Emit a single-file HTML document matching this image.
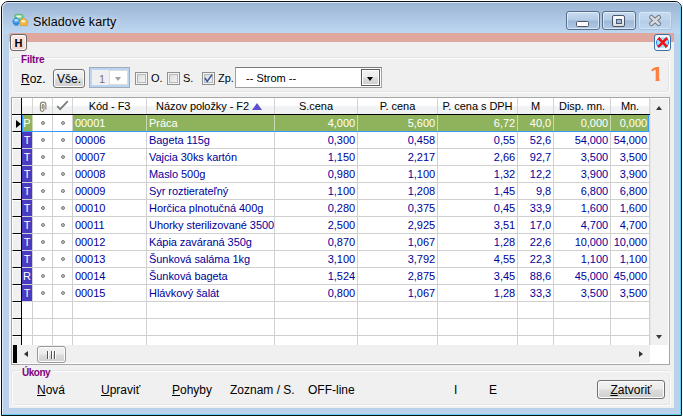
<!DOCTYPE html>
<html><head><meta charset="utf-8"><title>Skladové karty</title>
<style>
html,body{margin:0;padding:0;background:#fff;}
body{width:683px;height:417px;position:relative;overflow:hidden;font-family:"Liberation Sans",Arial,sans-serif;font-size:12px;color:#000;}
.abs,.abs *{position:absolute;}
div{position:absolute;box-sizing:border-box;}
span{position:absolute;white-space:nowrap;}
#win{left:1px;top:1px;width:681px;height:415px;border:1px solid #0c0f13;border-radius:7px 7px 0 0;background:#b9d1ea;overflow:hidden;}
#glass{left:0;top:0;width:679px;height:32px;background:linear-gradient(#98b3d2 0,#a3bddb 8px,#b3cde9 22px,#bfd7f1 32px);}
#inner{left:0;top:0;width:679px;height:413px;border:1px solid #dfeaf6;border-radius:6px 6px 0 0;border-bottom-color:#5fd0ee;border-right-color:#5fd0ee;}
#client{left:7px;top:31px;width:665px;height:375px;background:#f0f0f0;}
#pink{left:0;top:0;width:665px;height:9px;background:#dfa79d;}
.t{font-size:12px;line-height:14px;}
u{text-decoration:underline;}
.s11{font-size:11px;}
.grp{border:1px solid #fdfdfd;border-radius:3px;box-shadow:-1px -1px 0 rgba(190,200,212,.28),inset -1px -1px 0 rgba(190,200,212,.28);}
.gl{font-weight:bold;font-size:10px;letter-spacing:-0.2px;color:#800080;background:#f0f0f0;padding:0 2px;line-height:12px;}
.btn{border:1px solid #707070;border-radius:3px;background:linear-gradient(#f2f2f2 0,#ebebeb 48%,#dddddd 52%,#cfcfcf 100%);box-shadow:inset 0 0 0 1px #fcfcfc;}
.cb{width:13px;height:13px;border:1px solid #8e8f8f;background:linear-gradient(135deg,#d8d8d8,#f6f6f6);box-shadow:inset 0 0 0 1px #f4f4f4, inset 0 0 0 2px #b5b9bd;}
#grid{width:659px;height:268px;background:#fff;overflow:hidden;border:1px solid #a6a6a6;}
#grid>div{}
.tri{display:inline-block;position:static;width:0;height:0;border-left:5px solid transparent;border-right:5px solid transparent;border-bottom:7px solid #5a50d0;margin-left:5px;vertical-align:0px;}
.au{width:0;height:0;border-left:3.5px solid transparent;border-right:3.5px solid transparent;border-bottom:4px solid #383838;}
.ad{width:0;height:0;border-left:3.5px solid transparent;border-right:3.5px solid transparent;border-top:4px solid #383838;}
.al{width:0;height:0;border-top:3.5px solid transparent;border-bottom:3.5px solid transparent;border-right:4px solid #303030;}
.ar{width:0;height:0;border-top:3.5px solid transparent;border-bottom:3.5px solid transparent;border-left:4px solid #303030;}
.hd{top:0;height:16px;background:linear-gradient(#ffffff 0,#ffffff 45%,#f1f2f4 55%,#f1f2f4 100%);border-right:1px solid #d5d5d5;text-align:center;font-size:11px;line-height:16px;white-space:nowrap;letter-spacing:-0.06px;}
.c{height:17px;border-right:1px solid #d0d0d0;border-bottom:1px solid #d0d0d0;font-size:11px;line-height:16px;color:#000099;letter-spacing:-0.06px;overflow:hidden;white-space:nowrap;}
.r{text-align:right;padding-right:2px;}
.l{padding-left:2px;}
.sel{background:#8fb35d;color:#fff;border-right-color:#c9d9b4;border-bottom-color:#8fb35d;}
.ind{left:0;width:9px;height:17px;background:#f0f0f0;border-bottom:1px solid #000;border-left:1px solid #fff;border-top:1px solid #fff;}
.ty{color:#fff;background:#4a3cc0;text-align:center;}
.ty.sel{background:#8fb35d;}
.dot{width:4px;height:4px;border-radius:2px;background:#c4c4c4;border:1px solid #7c7c7c;}
</style></head><body>
<div id="win"><div id="glass"></div><div id="inner"></div>

<svg style="position:absolute;left:10px;top:10px" width="18" height="16" viewBox="0 0 18 16">
<rect x="2.8" y="2.4" width="8" height="5.5" rx="1.3" fill="#7fd08a" stroke="#4fb262" stroke-width="0.8"/>
<rect x="4.3" y="3.4" width="5" height="2.2" rx="0.8" fill="#e6fae8"/>
<path d="M0.8 8.5 L4.2 5.6 L7.8 8.5 L7 12 L1.6 12 Z" fill="#3f9af0" stroke="#2a7fd8" stroke-width="0.8"/>
<ellipse cx="4.3" cy="8.3" rx="2" ry="1.2" fill="#b8e0ff"/>
<rect x="2.4" y="12.2" width="3.8" height="1.4" fill="#2a7fd8"/>
<path d="M7.5 9.5 L11.5 5.8 L15.8 9.5 L15 13.6 L8.3 13.6 Z" fill="#f0b848" stroke="#d89a28" stroke-width="0.8"/>
<ellipse cx="11.3" cy="9.3" rx="2.2" ry="1.3" fill="#fdeec8"/>
</svg>
<span style="left:31px;top:13px;font-size:12.5px;letter-spacing:0.1px;line-height:15px;color:#000;text-shadow:0 0 7px rgba(255,255,255,.7),0 0 10px rgba(255,255,255,.5);">Skladové karty</span>

<div style="left:564px;top:9px;width:34px;height:19px;border:1px solid #566d8c;border-radius:3px;background:linear-gradient(#c9dcf0 0,#b4cbe6 48%,#9db8d8 52%,#b0c9e6 100%);box-shadow:inset 0 0 0 1px rgba(255,255,255,.55);">
 <div style="left:9px;top:9px;width:13px;height:6px;border:1px solid #4c5566;border-radius:1.5px;background:#fbfbfb;"></div></div>
<div style="left:600px;top:9px;width:34px;height:19px;border:1px solid #566d8c;border-radius:3px;background:linear-gradient(#c9dcf0 0,#b4cbe6 48%,#9db8d8 52%,#b0c9e6 100%);box-shadow:inset 0 0 0 1px rgba(255,255,255,.55);">
 <div style="left:9px;top:3px;width:13px;height:12px;border:1px solid #4c5566;border-radius:2px;background:linear-gradient(#fdfdfd,#dcdfe3);"><div style="left:3px;top:3px;width:6px;height:5px;border:1px solid #4d5b70;background:#9fb8d8;"></div></div></div>
<div style="left:636px;top:9px;width:34px;height:19px;border:1px solid #a9c2de;border-radius:3px;background:linear-gradient(#c5daf1 0,#bdd4ee 48%,#b4cde9 52%,#bfd6ef 100%);box-shadow:inset 0 0 0 1px rgba(255,255,255,.35);">
 <svg style="position:absolute;left:8px;top:1px" width="17" height="15" viewBox="0 0 17 15"><path d="M4.4 4.2 L11.8 10.8 M11.8 4.2 L4.4 10.8" stroke="#6f7884" stroke-width="4.6" stroke-linecap="round"/><path d="M4.4 4.2 L11.8 10.8 M11.8 4.2 L4.4 10.8" stroke="#d6dade" stroke-width="2.6" stroke-linecap="round"/></svg></div>

<div id="client"><div id="pink"></div>
<div class="btn" style="left:1px;top:1px;width:17px;height:17px;border-color:#6e6462;background:linear-gradient(#fbecea,#f0d4cf);"><span style="left:0;top:1px;width:15px;text-align:center;font-weight:bold;font-size:11px;line-height:15px;">H</span></div>
<div style="left:645px;top:1px;width:17px;height:17px;border:1px solid #3b6fa6;border-radius:3px;background:#f3f8fd;">
<svg style="position:absolute;left:0;top:0" width="15" height="15" viewBox="0 0 15 15"><circle cx="7.5" cy="7.5" r="5.3" fill="#8ce8f8"/><circle cx="7.5" cy="7.5" r="3" fill="#c4f4fb"/><path d="M2.2 10.5 A6 6 0 0 1 5 2.2 M12.8 4.5 A6 6 0 0 1 10 12.8" stroke="#2f6fe0" stroke-width="1" fill="none"/><path d="M11.8 1.6 L13.2 5 L10.6 4.6 Z M3.2 13.4 L1.8 10 L4.4 10.4 Z" fill="#2f6fe0"/><path d="M3.4 3 L12 11.8 M12 3 L3.4 11.8" stroke="#f0101c" stroke-width="2.6"/></svg></div>
<div class="grp" style="left:3px;top:25px;width:658px;height:35px;"></div>
<span class="gl" style="left:10px;top:21px;">Filtre</span>
<span class="t" style="left:12px;top:39px;"><u>R</u>oz.</span>
<div class="btn" style="left:44px;top:36px;width:32px;height:19px;"><span class="t" style="left:0;top:2px;width:30px;text-align:center;">Vše.</span></div>
<div style="left:80px;top:34px;width:41px;height:21px;border:1px solid #a3abb5;background:#f0f0f0;box-shadow:inset 0 0 0 2px #b9d5f3;">
<span class="t s11" style="left:9px;top:4px;color:#7a7085;">1</span>
<div style="left:19px;top:2px;width:19px;height:15px;background:#fff;border:1px solid #dcdcdc;"></div>
<div style="left:25px;top:9px;width:0;height:0;border-left:3.5px solid transparent;border-right:3.5px solid transparent;border-top:4px solid #a0a0a0;"></div></div>
<div class="cb" style="left:126px;top:39px;"></div><span class="t s11" style="left:142px;top:38px;">O.</span>
<div class="cb" style="left:158px;top:39px;"></div><span class="t s11" style="left:174px;top:38px;">S.</span>
<div class="cb" style="left:193px;top:39px;"><svg style="position:absolute;left:1px;top:1px" width="9" height="9" viewBox="0 0 9 9"><path d="M1 4 L3.2 7.5 L8 0.8" stroke="#3d5298" stroke-width="1.5" fill="none"/></svg></div><span class="t s11" style="left:209px;top:38px;">Zp.</span>
<div style="left:226px;top:34px;width:147px;height:21px;border:1px solid #a0a0a0;border-top-color:#7b7b7b;background:#fff;">
<span class="t s11" style="left:10px;top:3px;">-- Strom --</span>
<div class="btn" style="left:125px;top:1px;width:19px;height:17px;border-radius:0;border-color:#5c5c5c;box-shadow:inset 0 0 0 1px #fff;"><div style="left:5px;top:7px;width:0;height:0;border-left:3.5px solid transparent;border-right:3.5px solid transparent;border-top:4px solid #000;"></div></div></div>
<span style="left:641px;top:30.5px;font-size:20px;line-height:20px;font-weight:bold;color:#ff7f3f;transform:scaleX(1.25);transform-origin:0 0;clip-path:polygon(0 0,7.6px 0,7.6px 100%,4.4px 100%,4.4px 14.4px,0 14.4px);">1</span>
<div id="grid" style="left:2px;top:64px;">
<div class="hd" style="left:0;width:9px;background:#f0f0f0;border-right:0;border-left:1px solid #fff;border-top:1px solid #fff;"></div>
<div class="hd" style="left:10px;width:11px;"></div>
<div class="hd" style="left:21px;width:20px;"><svg style="position:absolute;left:5px;top:2.5px" width="10.5" height="12.6" viewBox="0 0 10 12"><path d="M7.5 8 L7.5 3.6 A2.6 2.6 0 0 0 2.3 3.6 L2.3 8.2 A1.7 1.7 0 0 0 5.7 8.2 L5.7 4.2 A0.8 0.8 0 0 0 4.1 4.2 L4.1 7.6" stroke="#8d8478" stroke-width="1.1" fill="none"/></svg></div>
<div class="hd" style="left:41px;width:20px;"><svg style="position:absolute;left:3px;top:2px" width="13" height="11" viewBox="0 0 13 11"><path d="M1.2 6.2 L4.2 9.2 L11.8 1.2" stroke="#7a7a7a" stroke-width="1.7" fill="none"/></svg></div>
<div class="hd" style="left:61px;width:74px;">Kód - F3</div>
<div class="hd" style="left:135px;width:128px;"><span style="left:9px;top:0;">Názov položky - F2</span><i class="tri" style="position:absolute;left:105px;top:5px;margin:0;"></i></div>
<div class="hd" style="left:263px;width:83px;">S.cena</div>
<div class="hd" style="left:346px;width:80px;">P. cena</div>
<div class="hd" style="left:426px;width:80px;">P. cena s DPH</div>
<div class="hd" style="left:506px;width:36px;">M</div>
<div class="hd" style="left:542px;width:57px;">Disp. mn.</div>
<div class="hd" style="left:599px;width:39px;">Mn.</div>
<div style="left:0;top:16px;width:638px;height:1px;background:#000;"></div>
<div class="ind" style="top:17px;"></div>
<div class="c ty sel" style="left:10px;top:17px;width:11px;">P</div>
<div class="c" style="left:21px;top:17px;width:20px;"><div class="dot" style="left:8px;top:6px;"></div></div>
<div class="c" style="left:41px;top:17px;width:20px;"><div class="dot" style="left:8px;top:6px;"></div></div>
<div class="c l sel" style="left:61px;top:17px;width:74px;">00001</div>
<div class="c l sel" style="left:135px;top:17px;width:128px;">Práca</div>
<div class="c r sel" style="left:263px;top:17px;width:83px;">4,000</div>
<div class="c r sel" style="left:346px;top:17px;width:80px;">5,600</div>
<div class="c r sel" style="left:426px;top:17px;width:80px;">6,72</div>
<div class="c r sel" style="left:506px;top:17px;width:36px;">40,0</div>
<div class="c r sel" style="left:542px;top:17px;width:57px;">0,000</div>
<div class="c r sel" style="left:599px;top:17px;width:39px;">0,000</div>
<div class="ind" style="top:34px;"></div>
<div class="c ty" style="left:10px;top:34px;width:11px;">T</div>
<div class="c" style="left:21px;top:34px;width:20px;"><div class="dot" style="left:8px;top:6px;"></div></div>
<div class="c" style="left:41px;top:34px;width:20px;"><div class="dot" style="left:8px;top:6px;"></div></div>
<div class="c l" style="left:61px;top:34px;width:74px;">00006</div>
<div class="c l" style="left:135px;top:34px;width:128px;">Bageta 115g</div>
<div class="c r" style="left:263px;top:34px;width:83px;">0,300</div>
<div class="c r" style="left:346px;top:34px;width:80px;">0,458</div>
<div class="c r" style="left:426px;top:34px;width:80px;">0,55</div>
<div class="c r" style="left:506px;top:34px;width:36px;">52,6</div>
<div class="c r" style="left:542px;top:34px;width:57px;">54,000</div>
<div class="c r" style="left:599px;top:34px;width:39px;">54,000</div>
<div class="ind" style="top:51px;"></div>
<div class="c ty" style="left:10px;top:51px;width:11px;">T</div>
<div class="c" style="left:21px;top:51px;width:20px;"><div class="dot" style="left:8px;top:6px;"></div></div>
<div class="c" style="left:41px;top:51px;width:20px;"><div class="dot" style="left:8px;top:6px;"></div></div>
<div class="c l" style="left:61px;top:51px;width:74px;">00007</div>
<div class="c l" style="left:135px;top:51px;width:128px;">Vajcia 30ks kartón</div>
<div class="c r" style="left:263px;top:51px;width:83px;">1,150</div>
<div class="c r" style="left:346px;top:51px;width:80px;">2,217</div>
<div class="c r" style="left:426px;top:51px;width:80px;">2,66</div>
<div class="c r" style="left:506px;top:51px;width:36px;">92,7</div>
<div class="c r" style="left:542px;top:51px;width:57px;">3,500</div>
<div class="c r" style="left:599px;top:51px;width:39px;">3,500</div>
<div class="ind" style="top:68px;"></div>
<div class="c ty" style="left:10px;top:68px;width:11px;">T</div>
<div class="c" style="left:21px;top:68px;width:20px;"><div class="dot" style="left:8px;top:6px;"></div></div>
<div class="c" style="left:41px;top:68px;width:20px;"><div class="dot" style="left:8px;top:6px;"></div></div>
<div class="c l" style="left:61px;top:68px;width:74px;">00008</div>
<div class="c l" style="left:135px;top:68px;width:128px;">Maslo 500g</div>
<div class="c r" style="left:263px;top:68px;width:83px;">0,980</div>
<div class="c r" style="left:346px;top:68px;width:80px;">1,100</div>
<div class="c r" style="left:426px;top:68px;width:80px;">1,32</div>
<div class="c r" style="left:506px;top:68px;width:36px;">12,2</div>
<div class="c r" style="left:542px;top:68px;width:57px;">3,900</div>
<div class="c r" style="left:599px;top:68px;width:39px;">3,900</div>
<div class="ind" style="top:85px;"></div>
<div class="c ty" style="left:10px;top:85px;width:11px;">T</div>
<div class="c" style="left:21px;top:85px;width:20px;"><div class="dot" style="left:8px;top:6px;"></div></div>
<div class="c" style="left:41px;top:85px;width:20px;"><div class="dot" style="left:8px;top:6px;"></div></div>
<div class="c l" style="left:61px;top:85px;width:74px;">00009</div>
<div class="c l" style="left:135px;top:85px;width:128px;">Syr roztierateľný</div>
<div class="c r" style="left:263px;top:85px;width:83px;">1,100</div>
<div class="c r" style="left:346px;top:85px;width:80px;">1,208</div>
<div class="c r" style="left:426px;top:85px;width:80px;">1,45</div>
<div class="c r" style="left:506px;top:85px;width:36px;">9,8</div>
<div class="c r" style="left:542px;top:85px;width:57px;">6,800</div>
<div class="c r" style="left:599px;top:85px;width:39px;">6,800</div>
<div class="ind" style="top:102px;"></div>
<div class="c ty" style="left:10px;top:102px;width:11px;">T</div>
<div class="c" style="left:21px;top:102px;width:20px;"><div class="dot" style="left:8px;top:6px;"></div></div>
<div class="c" style="left:41px;top:102px;width:20px;"><div class="dot" style="left:8px;top:6px;"></div></div>
<div class="c l" style="left:61px;top:102px;width:74px;">00010</div>
<div class="c l" style="left:135px;top:102px;width:128px;">Horčica plnotučná 400g</div>
<div class="c r" style="left:263px;top:102px;width:83px;">0,280</div>
<div class="c r" style="left:346px;top:102px;width:80px;">0,375</div>
<div class="c r" style="left:426px;top:102px;width:80px;">0,45</div>
<div class="c r" style="left:506px;top:102px;width:36px;">33,9</div>
<div class="c r" style="left:542px;top:102px;width:57px;">1,600</div>
<div class="c r" style="left:599px;top:102px;width:39px;">1,600</div>
<div class="ind" style="top:119px;"></div>
<div class="c ty" style="left:10px;top:119px;width:11px;">T</div>
<div class="c" style="left:21px;top:119px;width:20px;"><div class="dot" style="left:8px;top:6px;"></div></div>
<div class="c" style="left:41px;top:119px;width:20px;"><div class="dot" style="left:8px;top:6px;"></div></div>
<div class="c l" style="left:61px;top:119px;width:74px;">00011</div>
<div class="c l" style="left:135px;top:119px;width:128px;">Uhorky sterilizované 3500</div>
<div class="c r" style="left:263px;top:119px;width:83px;">2,500</div>
<div class="c r" style="left:346px;top:119px;width:80px;">2,925</div>
<div class="c r" style="left:426px;top:119px;width:80px;">3,51</div>
<div class="c r" style="left:506px;top:119px;width:36px;">17,0</div>
<div class="c r" style="left:542px;top:119px;width:57px;">4,700</div>
<div class="c r" style="left:599px;top:119px;width:39px;">4,700</div>
<div class="ind" style="top:136px;"></div>
<div class="c ty" style="left:10px;top:136px;width:11px;">T</div>
<div class="c" style="left:21px;top:136px;width:20px;"><div class="dot" style="left:8px;top:6px;"></div></div>
<div class="c" style="left:41px;top:136px;width:20px;"><div class="dot" style="left:8px;top:6px;"></div></div>
<div class="c l" style="left:61px;top:136px;width:74px;">00012</div>
<div class="c l" style="left:135px;top:136px;width:128px;">Kápia zaváraná 350g</div>
<div class="c r" style="left:263px;top:136px;width:83px;">0,870</div>
<div class="c r" style="left:346px;top:136px;width:80px;">1,067</div>
<div class="c r" style="left:426px;top:136px;width:80px;">1,28</div>
<div class="c r" style="left:506px;top:136px;width:36px;">22,6</div>
<div class="c r" style="left:542px;top:136px;width:57px;">10,000</div>
<div class="c r" style="left:599px;top:136px;width:39px;">10,000</div>
<div class="ind" style="top:153px;"></div>
<div class="c ty" style="left:10px;top:153px;width:11px;">T</div>
<div class="c" style="left:21px;top:153px;width:20px;"><div class="dot" style="left:8px;top:6px;"></div></div>
<div class="c" style="left:41px;top:153px;width:20px;"><div class="dot" style="left:8px;top:6px;"></div></div>
<div class="c l" style="left:61px;top:153px;width:74px;">00013</div>
<div class="c l" style="left:135px;top:153px;width:128px;">Šunková saláma 1kg</div>
<div class="c r" style="left:263px;top:153px;width:83px;">3,100</div>
<div class="c r" style="left:346px;top:153px;width:80px;">3,792</div>
<div class="c r" style="left:426px;top:153px;width:80px;">4,55</div>
<div class="c r" style="left:506px;top:153px;width:36px;">22,3</div>
<div class="c r" style="left:542px;top:153px;width:57px;">1,100</div>
<div class="c r" style="left:599px;top:153px;width:39px;">1,100</div>
<div class="ind" style="top:170px;"></div>
<div class="c ty" style="left:10px;top:170px;width:11px;">R</div>
<div class="c" style="left:21px;top:170px;width:20px;"><div class="dot" style="left:8px;top:6px;"></div></div>
<div class="c" style="left:41px;top:170px;width:20px;"><div class="dot" style="left:8px;top:6px;"></div></div>
<div class="c l" style="left:61px;top:170px;width:74px;">00014</div>
<div class="c l" style="left:135px;top:170px;width:128px;">Šunková bageta</div>
<div class="c r" style="left:263px;top:170px;width:83px;">1,524</div>
<div class="c r" style="left:346px;top:170px;width:80px;">2,875</div>
<div class="c r" style="left:426px;top:170px;width:80px;">3,45</div>
<div class="c r" style="left:506px;top:170px;width:36px;">88,6</div>
<div class="c r" style="left:542px;top:170px;width:57px;">45,000</div>
<div class="c r" style="left:599px;top:170px;width:39px;">45,000</div>
<div class="ind" style="top:187px;"></div>
<div class="c ty" style="left:10px;top:187px;width:11px;">T</div>
<div class="c" style="left:21px;top:187px;width:20px;"><div class="dot" style="left:8px;top:6px;"></div></div>
<div class="c" style="left:41px;top:187px;width:20px;"><div class="dot" style="left:8px;top:6px;"></div></div>
<div class="c l" style="left:61px;top:187px;width:74px;">00015</div>
<div class="c l" style="left:135px;top:187px;width:128px;">Hlávkový šalát</div>
<div class="c r" style="left:263px;top:187px;width:83px;">0,800</div>
<div class="c r" style="left:346px;top:187px;width:80px;">1,067</div>
<div class="c r" style="left:426px;top:187px;width:80px;">1,28</div>
<div class="c r" style="left:506px;top:187px;width:36px;">33,3</div>
<div class="c r" style="left:542px;top:187px;width:57px;">3,500</div>
<div class="c r" style="left:599px;top:187px;width:39px;">3,500</div>
<div class="ind" style="top:204px;"></div>
<div class="c" style="left:10px;top:204px;width:11px;"></div>
<div class="c" style="left:21px;top:204px;width:20px;"></div>
<div class="c" style="left:41px;top:204px;width:20px;"></div>
<div class="c" style="left:61px;top:204px;width:74px;"></div>
<div class="c" style="left:135px;top:204px;width:128px;"></div>
<div class="c" style="left:263px;top:204px;width:83px;"></div>
<div class="c" style="left:346px;top:204px;width:80px;"></div>
<div class="c" style="left:426px;top:204px;width:80px;"></div>
<div class="c" style="left:506px;top:204px;width:36px;"></div>
<div class="c" style="left:542px;top:204px;width:57px;"></div>
<div class="c" style="left:599px;top:204px;width:39px;"></div>
<div class="ind" style="top:221px;"></div>
<div class="c" style="left:10px;top:221px;width:11px;"></div>
<div class="c" style="left:21px;top:221px;width:20px;"></div>
<div class="c" style="left:41px;top:221px;width:20px;"></div>
<div class="c" style="left:61px;top:221px;width:74px;"></div>
<div class="c" style="left:135px;top:221px;width:128px;"></div>
<div class="c" style="left:263px;top:221px;width:83px;"></div>
<div class="c" style="left:346px;top:221px;width:80px;"></div>
<div class="c" style="left:426px;top:221px;width:80px;"></div>
<div class="c" style="left:506px;top:221px;width:36px;"></div>
<div class="c" style="left:542px;top:221px;width:57px;"></div>
<div class="c" style="left:599px;top:221px;width:39px;"></div>
<div class="ind" style="top:238px;"></div>
<div class="c" style="left:10px;top:238px;width:11px;"></div>
<div class="c" style="left:21px;top:238px;width:20px;"></div>
<div class="c" style="left:41px;top:238px;width:20px;"></div>
<div class="c" style="left:61px;top:238px;width:74px;"></div>
<div class="c" style="left:135px;top:238px;width:128px;"></div>
<div class="c" style="left:263px;top:238px;width:83px;"></div>
<div class="c" style="left:346px;top:238px;width:80px;"></div>
<div class="c" style="left:426px;top:238px;width:80px;"></div>
<div class="c" style="left:506px;top:238px;width:36px;"></div>
<div class="c" style="left:542px;top:238px;width:57px;"></div>
<div class="c" style="left:599px;top:238px;width:39px;"></div>
<div style="left:10px;top:17px;width:1px;height:17px;background:#3399ff;"></div>
<div style="left:10px;top:33px;width:627px;height:1px;background:#3399ff;"></div>
<div style="left:636px;top:17px;width:1px;height:17px;background:#3399ff;"></div>
<div style="left:4px;top:22px;width:0;height:0;border-top:4px solid transparent;border-bottom:4px solid transparent;border-left:5px solid #000;"></div>
<div style="left:9px;top:0;width:1px;height:247px;background:#000;"></div>
<div style="left:638px;top:1px;width:18px;height:246px;background:#f0f0f0;border-left:1px solid #e6e6e6;"></div>
<div class="au" style="left:644px;top:8px;"></div>
<div class="ad" style="left:644px;top:237px;"></div>
<div style="left:0;top:247px;width:638px;height:18px;background:#f0f0f0;"></div>
<div style="left:638px;top:247px;width:19px;height:18px;background:#fff;"></div>
<div style="left:1px;top:247px;width:4px;height:18px;background:#000;"></div>
<div class="al" style="left:12px;top:253px;"></div>
<div class="btn" style="left:25px;top:248px;width:29px;height:17px;border-color:#979797;"><div style="left:9px;top:4px;width:1px;height:8px;background:#555;box-shadow:1px 0 0 #fff,4px 0 0 #555,5px 0 0 #fff,7px 0 0 #555,8px 0 0 #fff;"></div></div>
<div class="ar" style="left:627px;top:253px;"></div>
</div>
<div class="grp" style="left:3px;top:338px;width:659px;height:35px;"></div>
<span class="gl" style="left:11px;top:334px;letter-spacing:-0.5px;">Úkony</span>
<span class="t" style="left:28px;top:350px;"><u>N</u>ová</span>
<span class="t" style="left:92px;top:350px;"><u>U</u>praviť</span>
<span class="t" style="left:163px;top:350px;"><u>P</u>ohyby</span>
<span class="t" style="left:221px;top:350px;">Zoznam / S.</span>
<span class="t" style="left:299px;top:350px;">OFF-line</span>
<span class="t" style="left:445px;top:350px;">I</span>
<span class="t" style="left:480px;top:350px;">E</span>
<div class="btn" style="left:588px;top:347px;width:68px;height:19px;"><span class="t" style="left:0;top:2px;width:66px;text-align:center;"><u>Z</u>atvoriť</span></div>
</div></div></body></html>
